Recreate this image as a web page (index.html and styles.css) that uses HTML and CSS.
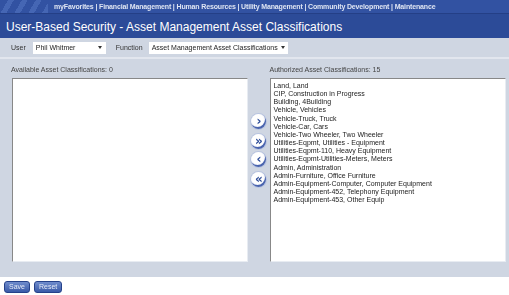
FILE: index.html
```html
<!doctype html>
<html lang="en">
<head>
  <meta charset="utf-8"/>
  <title>User-Based Security</title>
  <link rel="stylesheet" href="styles.css">
</head>
<body>
<div class="topnav">
  <div class="stripes"></div>
  <nav class="menu">
    <a>myFavorites</a> | <a>Financial Management</a> | <a>Human Resources</a> | <a>Utility Management</a> | <a>Community Development</a> | <a>Maintenance</a>
  </nav>
</div>
<div class="titlebar">User-Based Security - Asset Management Asset Classifications</div>
<div class="toolbar">
  <label class="lbl">User</label>
  <div class="select sel-user"><span>Phil Whitmer</span><i class="arrow"></i></div>
  <label class="lbl lbl-fn">Function</label>
  <div class="select sel-fn"><span>Asset Management Asset Classifications</span><i class="arrow"></i></div>
</div>
<div class="panel">
  <div class="col">
    <div class="cap">Available Asset Classifications: 0</div>
    <div class="listbox"></div>
  </div>
  <div class="movers">
    <button class="mv">&#x203A;</button>
    <button class="mv">&raquo;</button>
    <button class="mv">&#x2039;</button>
    <button class="mv">&laquo;</button>
  </div>
  <div class="col">
    <div class="cap">Authorized Asset Classifications: 15</div>
    <div class="listbox">
      <div>Land, Land</div>
      <div>CIP, Construction in Progress</div>
      <div>Building, 4Building</div>
      <div>Vehicle, Vehicles</div>
      <div>Vehicle-Truck, Truck</div>
      <div>Vehicle-Car, Cars</div>
      <div>Vehicle-Two Wheeler, Two Wheeler</div>
      <div>Utilities-Eqpmt, Utilities - Equipment</div>
      <div>Utilities-Eqpmt-110, Heavy Equipment</div>
      <div>Utilities-Eqpmt-Utilities-Meters, Meters</div>
      <div>Admin, Administration</div>
      <div>Admin-Furniture, Office Furniture</div>
      <div>Admin-Equipment-Computer, Computer Equipment</div>
      <div>Admin-Equipment-452, Telephony Equipment</div>
      <div>Admin-Equipment-453, Other Equip</div>
    </div>
  </div>
</div>
<div class="actions">
  <button class="btn">Save</button>
  <button class="btn">Reset</button>
</div>
</body>
</html>
```
FILE: styles.css
```css
:root{
  --navy:#2c4b98;--panel:#cfd6e2;--text:#333;
}
body{margin:0;font-family:'Liberation Sans',Arial,sans-serif;color:var(--text);background:#fff;width:509px}
.topnav{height:13px;background:#3252a2;border-bottom:1px solid #243f86;display:flex;align-items:center;will-change:transform}
.stripes{width:48px;height:13px;flex:none;
  background:repeating-linear-gradient(120deg,#3252a2 0 7px,#4566b4 7px 12px)}
.menu{flex:1;padding-left:6px;font-size:7px;font-weight:700;color:#dfe5f3;white-space:nowrap;letter-spacing:-.15px}
.menu a{color:#dfe5f3}
.titlebar{height:24px;background:var(--navy);color:#fff;font-size:12px;line-height:26px;padding-left:6px;box-sizing:border-box}
.toolbar{height:19px;background:var(--panel);display:flex;align-items:center;font-size:7px;border-bottom:2px solid #e2e6ee;will-change:transform}
.lbl{margin-left:11px;margin-right:7px;color:#333}
.lbl-fn{margin-left:10px;margin-right:6px}
.select{height:12px;background:#fff;display:flex;align-items:center;padding:0 4px 0 3px;box-sizing:border-box;font-size:7px;color:#222}
.select span{flex:1;white-space:nowrap}
.sel-user{width:73px}
.sel-fn{width:139px}
.arrow{width:0;height:0;border-left:2.5px solid transparent;border-right:2.5px solid transparent;border-top:3px solid #333;margin-left:3px}
.panel{height:218px;background:var(--panel);display:flex;padding:0 3px 0 12px;box-sizing:border-box;will-change:transform}
.col{width:236px;display:flex;flex-direction:column}
.cap{font-size:7px;color:#444;height:19px;line-height:15px;padding-top:3px;margin-left:-1px;box-sizing:border-box}
.listbox{height:184px;background:#fff;border-top:1px solid #888;border-left:1px solid #888;border-right:1px solid #e8ecf2;border-bottom:1px solid #e8ecf2;box-sizing:border-box;padding:3px 0 0 2px;font-size:7px;line-height:8.15px;color:#222}
.movers{width:23px;display:flex;flex-direction:column;align-items:center;padding-top:55px;gap:5px}
.mv{width:15px;height:15px;border-radius:50%;border:none;padding:0 0 1px;
  background:radial-gradient(circle at 45% 40%,#fff 0,#fff 45%,#dfe5f3 75%,#8799c8 100%);
  color:#2c4b98;font-weight:700;font-size:12px;line-height:13px;font-family:'DejaVu Sans',sans-serif;
  box-shadow:inset -1px -2px 0 #4a64ae,0 0 0 1px #b8c4e0}
.mv:nth-child(3){margin-top:-2px}
.actions{display:flex;gap:4px;padding:4px 0 0 4px;will-change:transform}
.btn{height:12px;padding:0 4px;border:1px solid #25418a;border-radius:3px;
  background:linear-gradient(#6f8ccc,#3a5aa8);color:#e6ebf7;font-size:7px;font-family:'Liberation Sans',Arial,sans-serif;line-height:10px}
```
